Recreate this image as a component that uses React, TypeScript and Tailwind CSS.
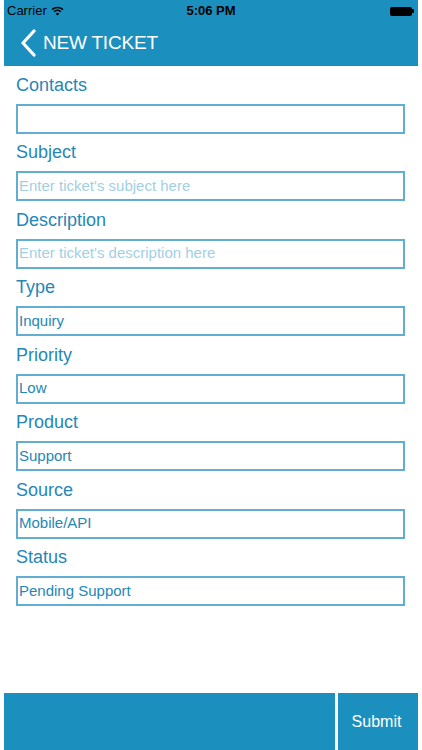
import React from "react";

const fields = [
  { label: "Contacts", value: "", placeholder: "" },
  { label: "Subject", value: "", placeholder: "Enter ticket's subject here" },
  { label: "Description", value: "", placeholder: "Enter ticket's description here" },
  { label: "Type", value: "Inquiry", placeholder: "" },
  { label: "Priority", value: "Low", placeholder: "" },
  { label: "Product", value: "Support", placeholder: "" },
  { label: "Source", value: "Mobile/API", placeholder: "" },
  { label: "Status", value: "Pending Support", placeholder: "" },
];

export default function App() {
  return (
    <div
      className="w-[422px] h-[750px] bg-white flex flex-col px-[4px] overflow-hidden"
      style={{ fontFamily: '"Liberation Sans", Arial, sans-serif' }}
    >
      {/* header with status bar */}
      <header className="bg-[#1b90bf] h-[66px] shrink-0 flex flex-col">
        <div className="h-[22px] flex items-center justify-between px-[3px] text-[13px] text-black">
          <div className="flex items-center gap-[4px] w-[120px]">
            <span>Carrier</span>
            <svg width="13" height="10" viewBox="0 0 13 10">
              <path d="M1 3.6 A8 8 0 0 1 12 3.6" fill="none" stroke="black" strokeWidth="1.5" />
              <path d="M3 5.8 A5 5 0 0 1 10 5.8" fill="none" stroke="black" strokeWidth="1.5" />
              <path d="M6.5 9.5 L4.6 7.7 A2.8 2.8 0 0 1 8.4 7.7 Z" fill="black" />
            </svg>
          </div>
          <span className="font-bold">5:06 PM</span>
          <div className="w-[120px] flex justify-end items-center pr-[1px]">
            <div className="w-[22px] h-[9px] bg-black rounded-[2px]" />
            <div className="w-[2px] h-[4px] bg-black rounded-r-[1px]" />
          </div>
        </div>
        <div className="flex-1 flex items-center pl-[15px] pb-[2px]">
          <svg width="18" height="28" viewBox="0 0 18 28" className="mr-[6px]">
            <path d="M15 2 L4 14 L15 26" fill="none" stroke="white" strokeWidth="3.2" strokeLinecap="round" strokeLinejoin="round" />
          </svg>
          <span className="text-white text-[19px] tracking-[-0.2px]">NEW TICKET</span>
        </div>
      </header>

      {/* form */}
      <main className="flex-1 pl-[12px] pr-[13px]">
        {fields.map((f) => (
          <div key={f.label}>
            <div className="h-[37.5px] flex items-center pt-[1px] text-[18px] text-[#2587b6]">
              {f.label}
            </div>
            <div className="h-[30px] border-2 border-[#62aed2] flex items-center px-[1px] text-[15px]">
              {f.value ? (
                <span className="text-[#2587b6]">{f.value}</span>
              ) : (
                <span className="text-[#a3cfe3]">{f.placeholder}</span>
              )}
            </div>
          </div>
        ))}
      </main>

      {/* bottom bar */}
      <footer className="h-[57px] shrink-0 flex gap-[3px]">
        <div className="flex-1 bg-[#1b90bf]" />
        <button className="w-[80px] bg-[#1b90bf] text-white text-[16px] pr-[3px]">Submit</button>
      </footer>
    </div>
  );
}
